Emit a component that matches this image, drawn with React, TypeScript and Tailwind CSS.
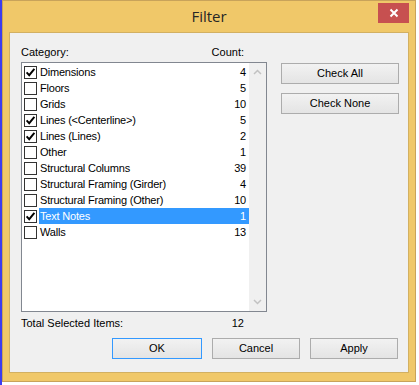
import { useState } from 'react';

type Item = { name: string; count: number; checked: boolean };

const initialItems: Item[] = [
  { name: 'Dimensions', count: 4, checked: true },
  { name: 'Floors', count: 5, checked: false },
  { name: 'Grids', count: 10, checked: false },
  { name: 'Lines (<Centerline>)', count: 5, checked: true },
  { name: 'Lines (Lines)', count: 2, checked: true },
  { name: 'Other', count: 1, checked: false },
  { name: 'Structural Columns', count: 39, checked: false },
  { name: 'Structural Framing (Girder)', count: 4, checked: false },
  { name: 'Structural Framing (Other)', count: 10, checked: false },
  { name: 'Text Notes', count: 1, checked: true },
  { name: 'Walls', count: 13, checked: false },
];

function CheckBox({ checked }: { checked: boolean }) {
  return (
    <div className="w-[13px] h-[13px] border border-[#333333] bg-white flex items-center justify-center shrink-0">
      {checked && (
        <svg width="11" height="11" viewBox="0 0 11 11">
          <path d="M1.6 5.4 L4.2 8.2 L9.4 1.8" fill="none" stroke="#000" strokeWidth="1.9" />
        </svg>
      )}
    </div>
  );
}

function WinButton({ label, width, focused }: { label: string; width: string; focused?: boolean }) {
  return (
    <button
      className={
        width +
        ' h-[21px] border bg-gradient-to-b from-[#f2f2f2] to-[#e4e4e4] text-[11px] text-black leading-none flex items-center justify-center ' +
        (focused ? 'border-[#3399ff]' : 'border-[#acacac]')
      }
    >
      {label}
    </button>
  );
}

export default function App() {
  const [items, setItems] = useState(initialItems);
  const [selected, setSelected] = useState(9);

  const toggle = (i: number) => {
    setSelected(i);
    setItems(items.map((it, j) => (j === i ? { ...it, checked: !it.checked } : it)));
  };

  const total = items.filter((it) => it.checked).reduce((s, it) => s + it.count, 0);

  return (
    <div className="w-[419px] h-[385px] bg-white flex font-['Liberation_Sans',Arial,sans-serif]">
      <div className="w-[2px] h-[385px] bg-[#3c3cf0]" />
      <div className="w-[414px] h-[382px] bg-[#f0c869] border border-[#c8a35a] flex flex-col relative">
        {/* title bar */}
        <div className="h-[31px] flex items-center justify-center">
          <span className="font-['Open_Sans',sans-serif] text-[15px] text-[#262626] leading-none pb-[1px]">Filter</span>
        </div>
        <div className="absolute top-[2px] right-[6px] w-[31px] h-[20px] bg-[#c75050] flex items-center justify-center">
          <svg width="10" height="10" viewBox="0 0 10 10">
            <path d="M1.5 1.5 L8.5 8.5 M8.5 1.5 L1.5 8.5" stroke="#fff" strokeWidth="2" />
          </svg>
        </div>

        {/* client area */}
        <div className="mx-[6px] h-[341px] bg-[#f0f0f0] border border-[#d2b062] pl-[11px] pt-[13px] flex flex-col">
          <div className="flex">
            <div className="w-[246px] flex flex-col">
              <div className="h-[13px] mb-[3px] flex justify-between pr-[23px] text-[11px] leading-[13px] text-black">
                <span>Category:</span>
                <span>Count:</span>
              </div>
              <div className="h-[250px] border border-[#828790] bg-white flex">
                <div className="flex-1 pt-[1px] flex flex-col">
                  {items.map((it, i) => (
                    <div key={it.name} className="h-[16px] flex items-center pl-[2px] cursor-default" onClick={() => toggle(i)}>
                      <CheckBox checked={it.checked} />
                      <div
                        className={
                          'ml-[2px] h-[16px] flex-1 flex items-center justify-between pl-[1px] pr-[3px] text-[11px] tracking-[-0.2px] ' +
                          (i === selected ? 'bg-[#3399ff] text-white' : 'text-black')
                        }
                      >
                        <span>{it.name}</span>
                        <span>{it.count}</span>
                      </div>
                    </div>
                  ))}
                </div>
                <div className="w-[17px] bg-[#f0f0f0] flex flex-col items-center justify-between py-[6px]">
                  <svg width="9" height="6" viewBox="0 0 9 6">
                    <path d="M1 5 L4.5 1.5 L8 5" fill="none" stroke="#c2c2c2" strokeWidth="1.5" />
                  </svg>
                  <svg width="9" height="6" viewBox="0 0 9 6">
                    <path d="M1 1 L4.5 4.5 L8 1" fill="none" stroke="#c2c2c2" strokeWidth="1.5" />
                  </svg>
                </div>
              </div>
              <div className="mt-[5px] h-[13px] flex justify-between pr-[23px] text-[11px] leading-[13px] text-black">
                <span>Total Selected Items:</span>
                <span>{total}</span>
              </div>
            </div>
            <div className="ml-[14px] pt-[17px] flex flex-col gap-[9px]">
              <WinButton label="Check All" width="w-[118px]" />
              <WinButton label="Check None" width="w-[118px]" />
            </div>
          </div>
          <div className="mt-[8px] pr-[10px] flex justify-end gap-[10px]">
            <WinButton label="OK" width="w-[90px]" focused />
            <WinButton label="Cancel" width="w-[88px]" />
            <WinButton label="Apply" width="w-[88px]" />
          </div>
        </div>
      </div>
    </div>
  );
}
